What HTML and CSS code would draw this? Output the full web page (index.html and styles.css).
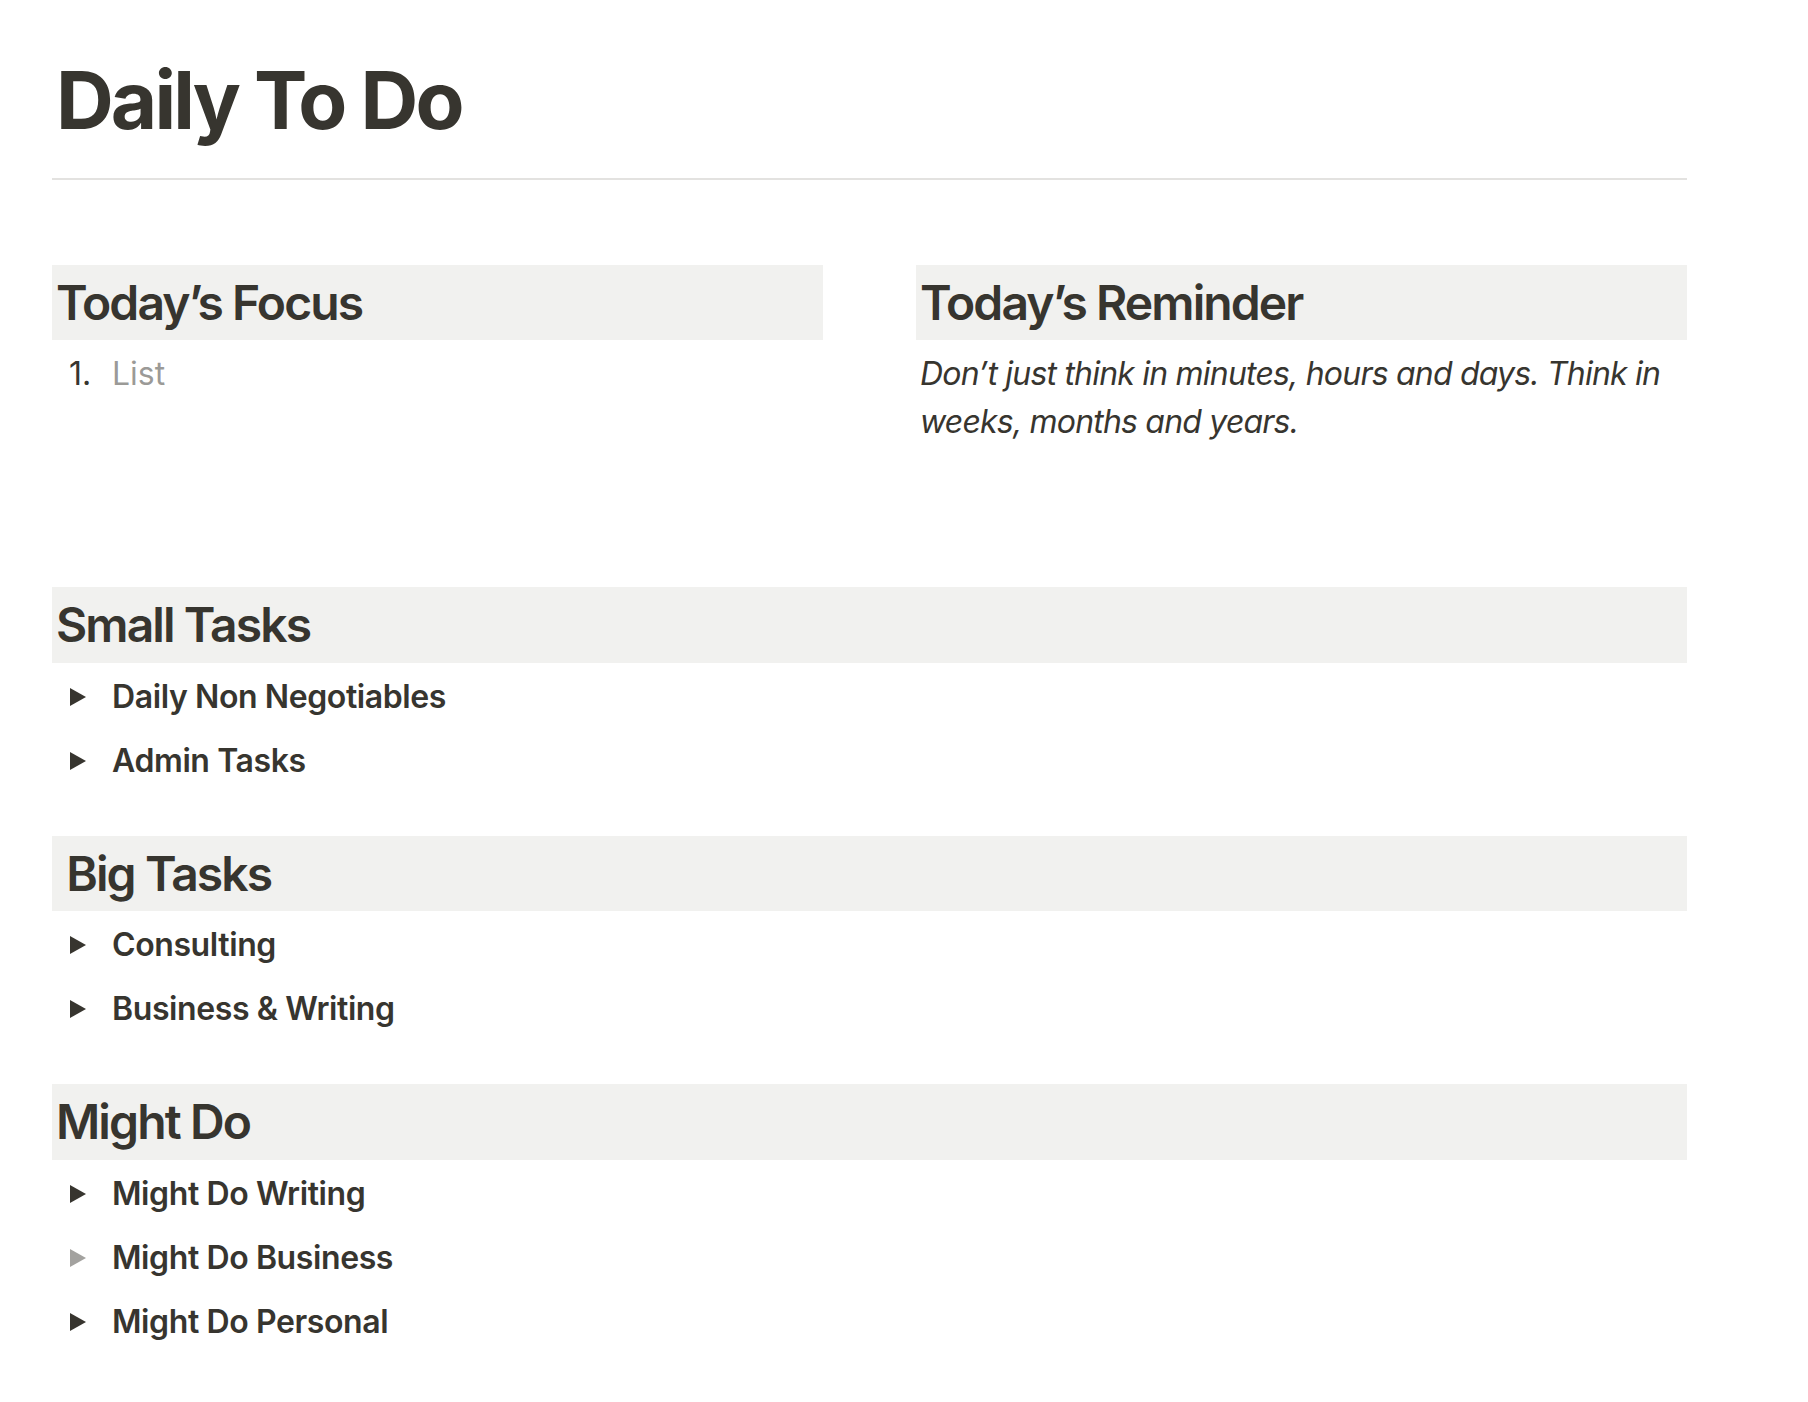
FILE: index.html
```html
<!DOCTYPE html>
<html lang="en">
<head>
<meta charset="UTF-8">
<meta name="viewport" content="width=device-width, initial-scale=1.0">
<title>Daily To Do</title>
<link rel="stylesheet" href="styles.css">
</head>
<body>
<div class="page">
    <h1 class="page-title">Daily To Do</h1>
    <div class="divider"></div>

    <!-- Focus / Reminder columns -->
    <div class="columns">
        <div class="column">
            <h2 class="heading">Today’s Focus</h2>
            <div class="row">
                <span class="marker">1.</span>
                <span class="placeholder">List</span>
            </div>
        </div>
        <div class="column">
            <h2 class="heading">Today’s Reminder</h2>
            <p class="quote">Don’t just think in minutes, hours and days. Think in weeks, months and years.</p>
        </div>
    </div>

    <!-- Small Tasks -->
    <div class="section first">
        <h2 class="heading">Small Tasks</h2>
        <div class="row toggle">
            <span class="caret"><svg width="16" height="18" viewBox="0 0 16 18"><polygon points="0,0 16,9 0,18"/></svg></span>
            <span class="label">Daily Non Negotiables</span>
        </div>
        <div class="row toggle">
            <span class="caret"><svg width="16" height="18" viewBox="0 0 16 18"><polygon points="0,0 16,9 0,18"/></svg></span>
            <span class="label">Admin Tasks</span>
        </div>
    </div>

    <!-- Big Tasks -->
    <div class="section">
        <h2 class="heading"> Big Tasks</h2>
        <div class="row toggle">
            <span class="caret"><svg width="16" height="18" viewBox="0 0 16 18"><polygon points="0,0 16,9 0,18"/></svg></span>
            <span class="label">Consulting</span>
        </div>
        <div class="row toggle">
            <span class="caret"><svg width="16" height="18" viewBox="0 0 16 18"><polygon points="0,0 16,9 0,18"/></svg></span>
            <span class="label">Business &amp; Writing</span>
        </div>
    </div>

    <!-- Might Do -->
    <div class="section">
        <h2 class="heading">Might Do</h2>
        <div class="row toggle">
            <span class="caret"><svg width="16" height="18" viewBox="0 0 16 18"><polygon points="0,0 16,9 0,18"/></svg></span>
            <span class="label">Might Do Writing</span>
        </div>
        <div class="row toggle">
            <span class="caret muted"><svg width="16" height="18" viewBox="0 0 16 18"><polygon points="0,0 16,9 0,18"/></svg></span>
            <span class="label">Might Do Business</span>
        </div>
        <div class="row toggle">
            <span class="caret"><svg width="16" height="18" viewBox="0 0 16 18"><polygon points="0,0 16,9 0,18"/></svg></span>
            <span class="label">Might Do Personal</span>
        </div>
    </div>
</div>
</body>
</html>
```

FILE: styles.css
```css
body {
    margin: 0;
    background-color: #ffffff;
    color: #37352f;
    font-family: Inter, "Noto Sans", sans-serif;
}
.page {
    width: 1635px;
    margin-left: 52px;
    padding-top: 52px;
    padding-bottom: 60px;
}
.page-title {
    margin: 0;
    padding-left: 4px;
    font-size: 80px;
    font-weight: 700;
    line-height: 1.2;
    letter-spacing: -2.9px;
}
.divider {
    margin-top: 30px;
    border-top: 2px solid #e3e2e0;
}
.columns {
    display: grid;
    grid-template-columns: 771px 771px;
    column-gap: 93px;
    margin-top: 85px;
}
.heading {
    margin: 0;
    padding: 7px 4px 6px;
    background-color: #f1f1ef;
    font-size: 48px;
    font-weight: 600;
    line-height: 1.3;
    letter-spacing: -1.9px;
    white-space: pre-wrap;
}
.row {
    display: flex;
    align-items: center;
    margin-top: 4px;
    padding: 6px 4px;
    font-size: 32px;
    line-height: 48px;
}
.marker {
    width: 48px;
    text-align: center;
}
.placeholder {
    margin-left: 8px;
    color: rgba(55, 53, 47, 0.5);
}
.quote {
    margin: 4px 0 0;
    padding: 6px 4px;
    font-size: 32px;
    line-height: 48px;
    font-style: italic;
    letter-spacing: -0.8px;
}
.section {
    margin-top: 45px;
}
.section.first {
    margin-top: 135px;
}
.caret {
    display: flex;
    justify-content: center;
    align-items: center;
    width: 44px;
    height: 48px;
}
.caret svg {
    fill: #37352f;
}
.caret.muted svg {
    fill: #a3a29f;
}
.label {
    margin-left: 12px;
    font-weight: 600;
    letter-spacing: -0.4px;
}
```
